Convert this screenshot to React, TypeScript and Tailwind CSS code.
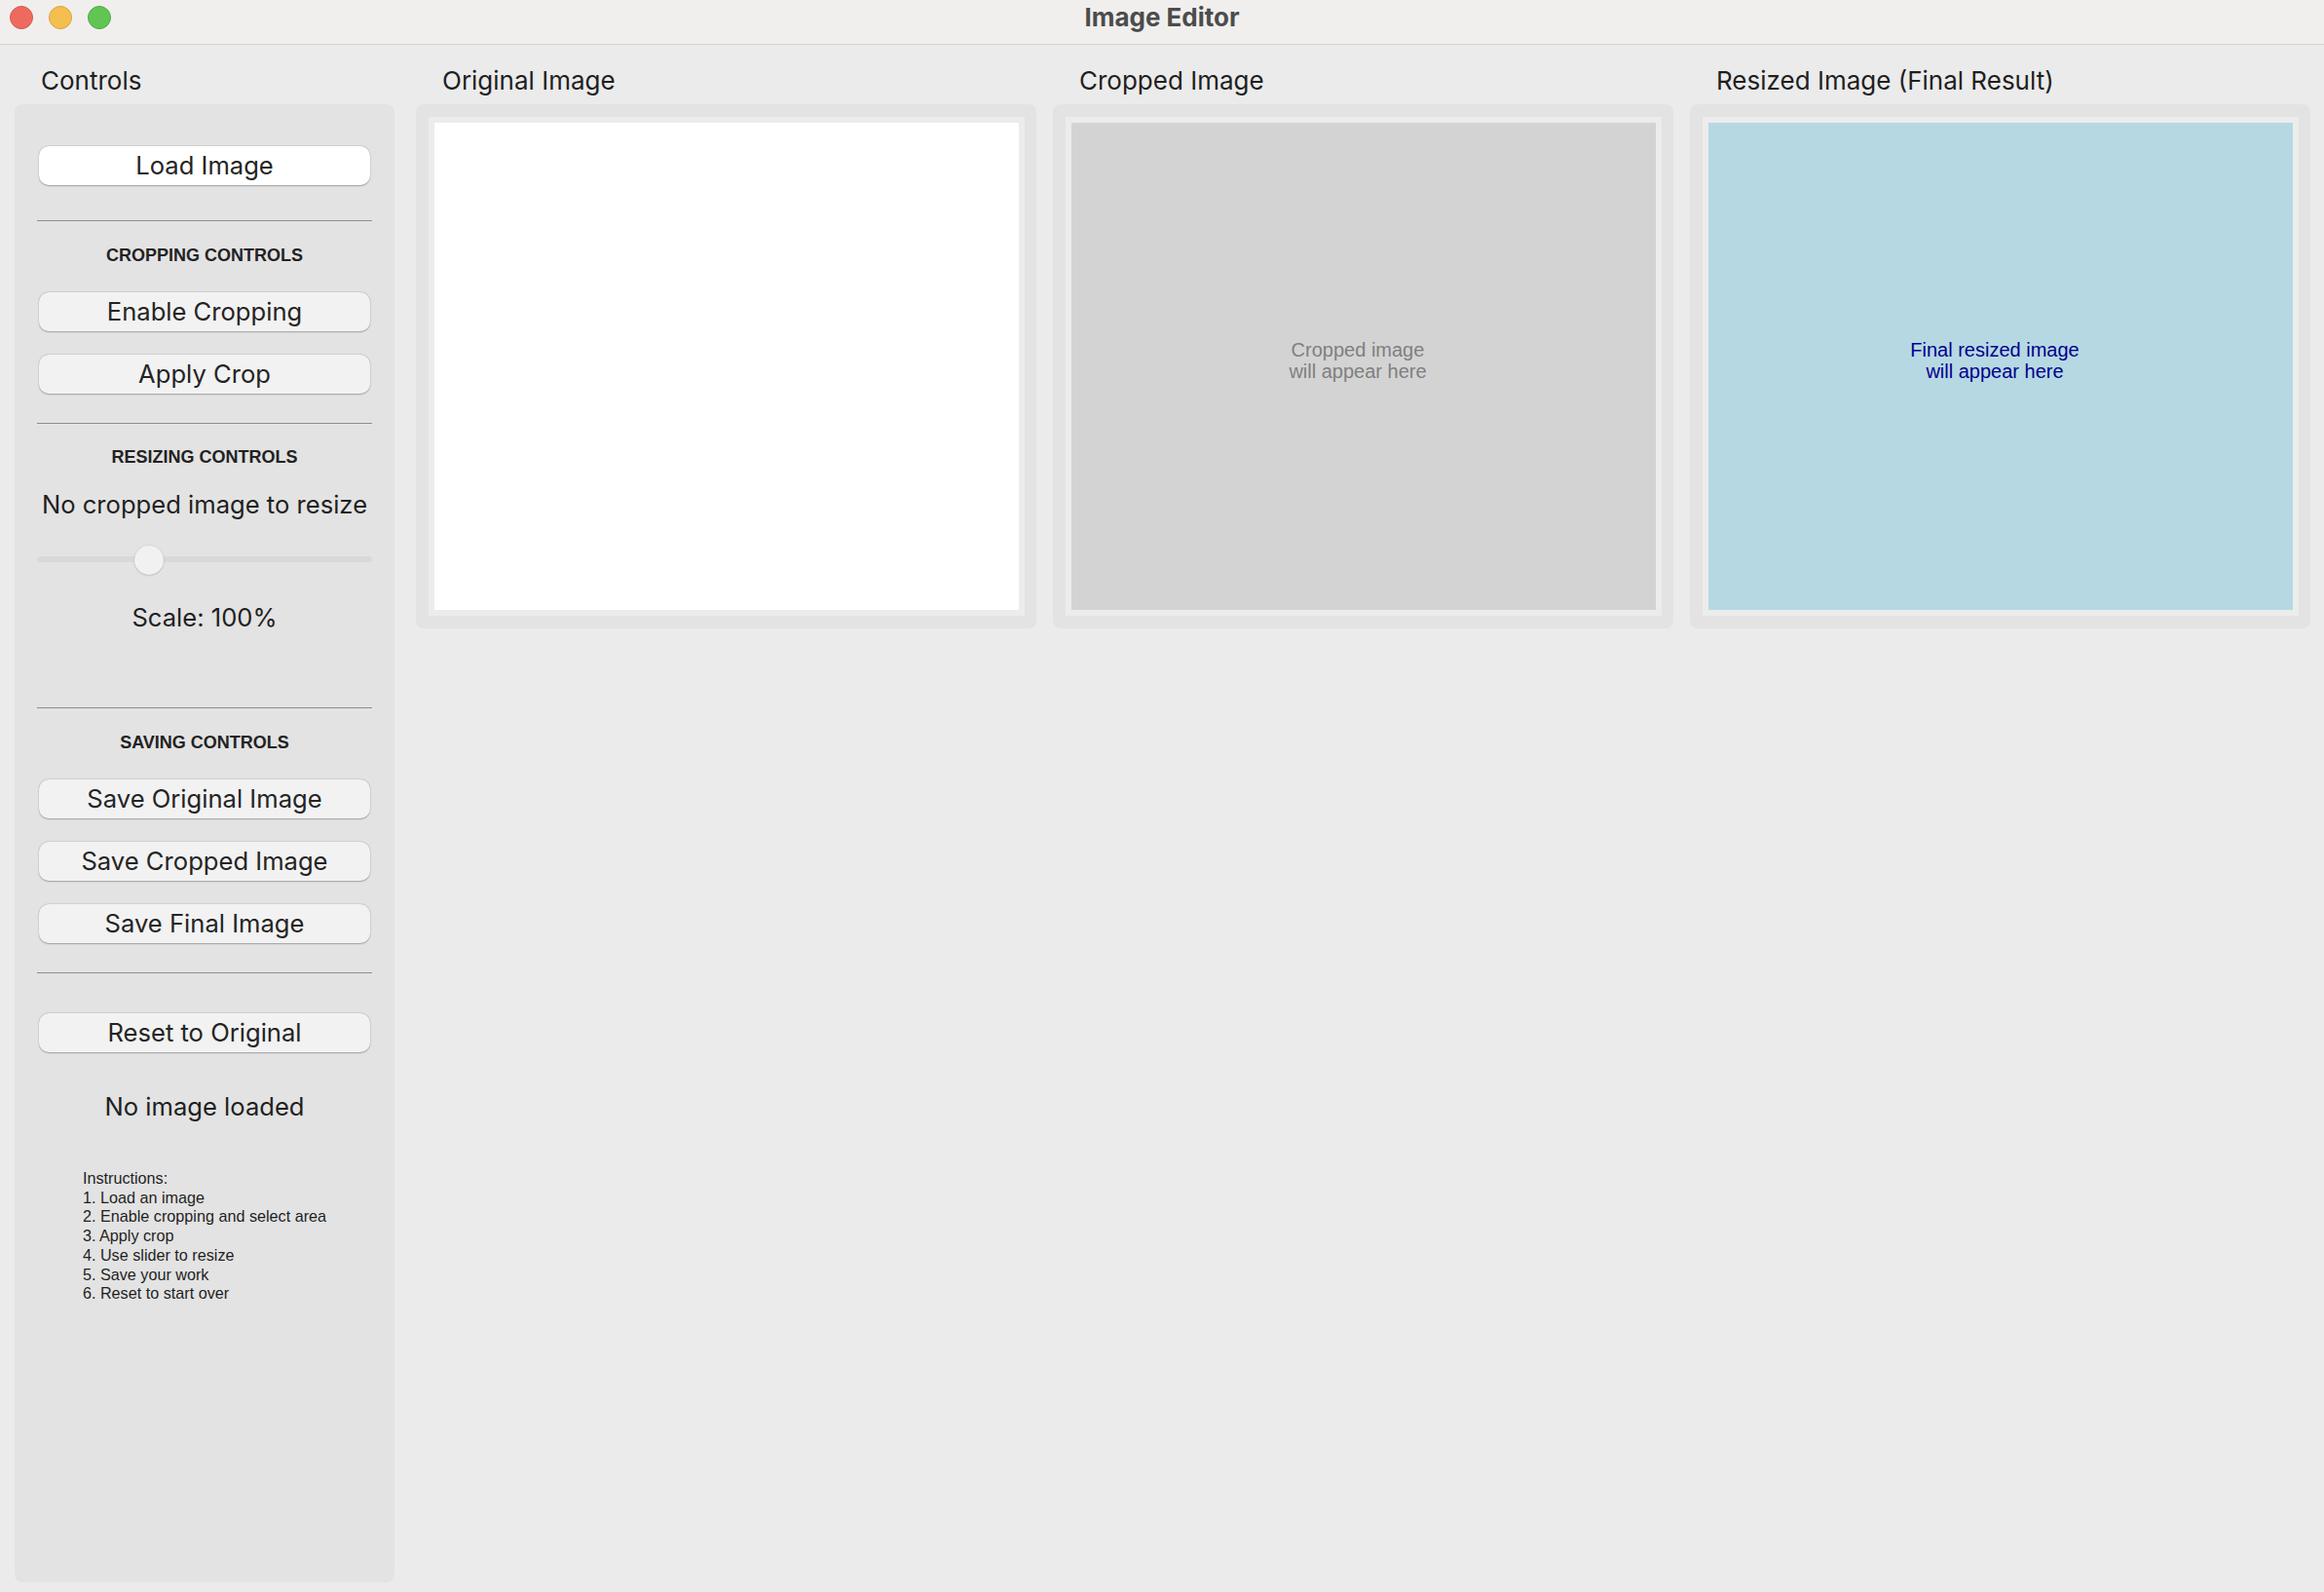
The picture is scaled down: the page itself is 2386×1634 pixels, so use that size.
import React from "react";

const ui = { fontFamily: "Inter, 'Noto Sans', sans-serif" };
const helv = { fontFamily: "'Liberation Sans', Arial, sans-serif" };

function Btn({ label, white, mt }: { label: string; white?: boolean; mt: string }) {
  return (
    <div
      className={`${mt} mx-[2px] h-[40px] rounded-[10px] flex items-center justify-center text-[25.6px] leading-[32px] text-[#242424] shadow-[0_0.5px_1.5px_rgba(0,0,0,0.28),0_0_0_0.5px_rgba(0,0,0,0.06)] ${
        white ? "bg-white" : "bg-[#f2f2f2]"
      }`}
      style={ui}
    >
      <span className="-mt-[1px]">{label}</span>
    </div>
  );
}

function Sep({ mt }: { mt: string }) {
  return <div className={`${mt} h-px bg-[#8e8e8e]`} />;
}

function Heading({ label, mt }: { label: string; mt: string }) {
  return (
    <div className={`${mt} h-[22px] leading-[22px] text-center text-[18px] font-bold text-[#222]`} style={helv}>
      {label}
    </div>
  );
}

function Label({ text }: { text: string }) {
  return (
    <div className="h-[61px] pt-[20px] pl-[27px]">
      <div className="text-[26px] leading-[34px] text-[#1f1f1f]" style={ui}>
        {text}
      </div>
    </div>
  );
}

function ImagePanel({
  title,
  canvas,
  text,
  textColor,
}: {
  title: string;
  canvas: string;
  text?: [string, string];
  textColor?: string;
}) {
  return (
    <div className="w-[637px] flex flex-col">
      <Label text={title} />
      <div className="h-[538px] rounded-[8px] bg-[#e3e3e3] pt-[13px] pl-[13px] pr-[12px] pb-[13px]">
        <div className="w-[612px] h-[512px] bg-[#ececec] p-[6px]">
          <div className={`w-[600px] h-[500px] ${canvas} flex flex-col items-center pt-[222px] pr-[12px]`}>
            {text && (
              <div className={`text-center text-[20px] leading-[22px] ${textColor}`} style={helv}>
                <div>{text[0]}</div>
                <div>{text[1]}</div>
              </div>
            )}
          </div>
        </div>
      </div>
    </div>
  );
}

export default function App() {
  return (
    <div className="w-[2386px] h-[1634px] bg-[#ebebeb] flex flex-col overflow-hidden">
      {/* title bar */}
      <div className="h-[46px] shrink-0 bg-[#f0efee] border-b border-[#d3d3d3] grid grid-cols-[1fr_auto_1fr] items-start">
        <div className="flex gap-[16px] pl-[10px] pt-[6px]">
          <div className="w-[24px] h-[24px] rounded-full bg-[#ee6a5f] border border-[#d7584d]" />
          <div className="w-[24px] h-[24px] rounded-full bg-[#f5bf4f] border border-[#d9a23c]" />
          <div className="w-[24px] h-[24px] rounded-full bg-[#61c554] border border-[#4fa942]" />
        </div>
        <div className="pt-[1px] text-[26px] leading-[33px] font-bold text-[#4c4c4c]" style={ui}>
          Image Editor
        </div>
        <div />
      </div>

      {/* main */}
      <div className="flex-1 flex pl-[15px] pr-[14px] pb-[10px] gap-[17px]">
        {/* controls column */}
        <div className="w-[390px] flex flex-col mr-[5px]">
          <Label text="Controls" />
          <div className="flex-1 rounded-[8px] bg-[#e3e3e3] px-[23px] pt-[43px] flex flex-col">
            <Btn label="Load Image" white mt="mt-0" />
            <Sep mt="mt-[36px]" />
            <Heading label="CROPPING CONTROLS" mt="mt-[24px]" />
            <Btn label="Enable Cropping" mt="mt-[27px]" />
            <Btn label="Apply Crop" mt="mt-[24px]" />
            <Sep mt="mt-[30px]" />
            <Heading label="RESIZING CONTROLS" mt="mt-[23px]" />
            <div className="mt-[21px] text-center text-[25.6px] leading-[34px] text-[#1f1f1f]" style={ui}>
              No cropped image to resize
            </div>
            <div className="mt-[25px] h-[30px] relative flex items-center">
              <div className="w-full h-[6px] rounded-full bg-[#d9d9d9] -mt-[2px]" />
              <div className="absolute left-[100px] top-0 w-[30px] h-[30px] rounded-full bg-[#f1f1f1] shadow-[0_0.5px_2px_rgba(0,0,0,0.25)]" />
            </div>
            <div className="mt-[27px] text-center text-[25.6px] leading-[34px] text-[#1f1f1f]" style={ui}>
              Scale: 100%
            </div>
            <Sep mt="mt-[75px]" />
            <Heading label="SAVING CONTROLS" mt="mt-[24px]" />
            <Btn label="Save Original Image" mt="mt-[27px]" />
            <Btn label="Save Cropped Image" mt="mt-[24px]" />
            <Btn label="Save Final Image" mt="mt-[24px]" />
            <Sep mt="mt-[30px]" />
            <Btn label="Reset to Original" mt="mt-[41px]" />
            <div className="mt-[39px] text-center text-[25.6px] leading-[34px] text-[#1f1f1f]" style={ui}>
              No image loaded
            </div>
            <div className="mt-[47px] self-center text-left text-[16.2px] leading-[19.7px] text-[#1f1f1f]" style={helv}>
              <div>Instructions:</div>
              <div>1. Load an image</div>
              <div>2. Enable cropping and select area</div>
              <div>3. Apply crop</div>
              <div>4. Use slider to resize</div>
              <div>5. Save your work</div>
              <div>6. Reset to start over</div>
            </div>
          </div>
        </div>

        <ImagePanel title="Original Image" canvas="bg-white" />
        <ImagePanel
          title="Cropped Image"
          canvas="bg-[#d3d3d3]"
          text={["Cropped image", "will appear here"]}
          textColor="text-[#7f7f7f]"
        />
        <ImagePanel
          title="Resized Image (Final Result)"
          canvas="bg-[#b6d8e3]"
          text={["Final resized image", "will appear here"]}
          textColor="text-[#00008b]"
        />
      </div>
    </div>
  );
}
